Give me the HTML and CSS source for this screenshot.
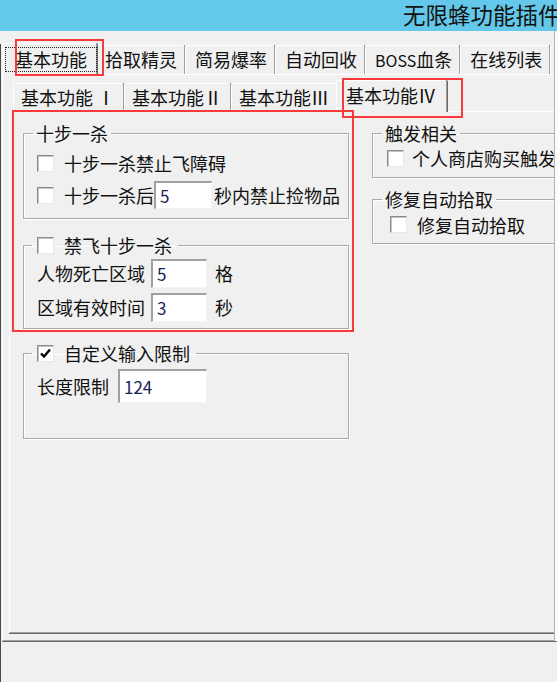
FILE: index.html
```html
<!DOCTYPE html>
<html lang="zh-CN">
<head>
    <meta charset="UTF-8">
    <meta name="viewport" content="width=device-width, initial-scale=1.0">
    <title>无限蜂功能插件</title>
    <link rel="stylesheet" href="styles.css">
</head>
<body>
    <div class="janela">
        <div class="titulo"><span>无限蜂功能插件</span></div>
        <div class="cliente">
            <div class="abas abas-principal">
                <div class="aba ativa"><span class="foco">基本功能</span></div>
                <div class="aba">拾取精灵</div>
                <div class="aba">简易爆率</div>
                <div class="aba">自动回收</div>
                <div class="aba"><span class="latino">BOSS</span>血条</div>
                <div class="aba">在线列表</div>
                <div class="aba aba-vazia"></div>
            </div>
            <div class="pagina pagina-externa">
                <div class="abas abas-sub">
                    <div class="aba">基本功能 Ⅰ</div>
                    <div class="aba">基本功能Ⅱ</div>
                    <div class="aba">基本功能Ⅲ</div>
                    <div class="aba ativa">基本功能Ⅳ</div>
                </div>
                <div class="pagina pagina-interna">
                    <div class="coluna coluna-esq">
                        <fieldset class="grupo g-shibu">
                            <legend>十步一杀</legend>
                            <div class="linha">
                                <span class="caixa"></span>
                                <span class="rotulo">十步一杀禁止飞障碍</span>
                            </div>
                            <div class="linha">
                                <span class="caixa"></span>
                                <span class="rotulo">十步一杀后</span>
                                <span class="campo c-seg">5</span>
                                <span class="unidade">秒内禁止捡物品</span>
                            </div>
                        </fieldset>
                        <fieldset class="grupo g-jinfei">
                            <legend><span class="caixa"></span>禁飞十步一杀</legend>
                            <div class="linha">
                                <span class="rotulo">人物死亡区域</span>
                                <span class="campo c-curto">5</span>
                                <span class="unidade">格</span>
                            </div>
                            <div class="linha">
                                <span class="rotulo">区域有效时间</span>
                                <span class="campo c-curto">3</span>
                                <span class="unidade">秒</span>
                            </div>
                        </fieldset>
                        <fieldset class="grupo g-limite">
                            <legend>
                                <span class="caixa marcada"><svg width="13" height="13" viewBox="0 0 13 13"><path d="M2 6.5 L5 9.5 L11 2.5" fill="none" stroke="#000" stroke-width="2.4"/></svg></span>自定义输入限制
                            </legend>
                            <div class="linha">
                                <span class="rotulo">长度限制</span>
                                <span class="campo c-longo">124</span>
                            </div>
                        </fieldset>
                    </div>
                    <div class="coluna coluna-dir">
                        <fieldset class="grupo g-gatilho">
                            <legend>触发相关</legend>
                            <div class="linha">
                                <span class="caixa"></span>
                                <span class="rotulo">个人商店购买触发</span>
                            </div>
                        </fieldset>
                        <fieldset class="grupo g-reparo">
                            <legend>修复自动拾取</legend>
                            <div class="linha">
                                <span class="caixa"></span>
                                <span class="rotulo">修复自动拾取</span>
                            </div>
                        </fieldset>
                    </div>
                </div>
            </div>
        </div>
        <div class="borda-dir"></div>
        <div class="marca marca-aba"></div>
        <div class="marca marca-sub"></div>
        <div class="marca marca-grupo"></div>
    </div>
</body>
</html>
```

FILE: styles.css
```css
body {
    margin: 0;
    background-color: #f0f0f0;
    font-family: "Noto Sans CJK SC", "Noto Sans", sans-serif;
    font-size: 18px;
    line-height: 20px;
    color: #111;
}

.janela {
    position: relative;
    width: 557px;
    height: 682px;
    overflow: hidden;
}

.titulo {
    height: 31px;
    background-color: #63c8e9;
    padding-left: 403px;
    font-size: 22.5px;
    line-height: 29px;
    white-space: nowrap;
    color: #111;
}

.cliente {
    height: 651px;
    border-left: 1px solid #4a4a4a;
    background-color: #f0f0f0;
}

/* abas */
.abas {
    display: flex;
    align-items: flex-end;
}

.aba {
    box-sizing: border-box;
    height: 29px;
    padding: 0 7px 0 9px;
    border-top: 1px solid #fff;
    border-left: 1px solid #fff;
    border-right: 1px solid #a0a0a0;
    box-shadow: 1px 0 0 #696969;
    border-radius: 2px 2px 0 0;
    line-height: 27px;
    white-space: nowrap;
    background-color: #f0f0f0;
}

.aba.ativa {
    position: relative;
    z-index: 2;
    height: 32px;
    margin: 0 -2px -1px;
    padding: 0 9px 0 11px;
    line-height: 30px;
}

.aba-vazia {
    width: 40px;
    flex: none;
}

.latino {
    font-size: 16px;
}

.abas-principal {
    height: 30px;
    margin-top: 13px;
    padding-left: 4px;
}

.foco {
    display: inline-block;
    margin: 0 -10px;
    padding: 0 9px;
    border: 1px dotted #222;
    line-height: 23px;
}

.abas-sub {
    height: 28px;
    padding: 8px 0 0 10px;
}

.abas-sub .aba {
    height: 28px;
    padding: 0 8px 0 7px;
    line-height: 26px;
}

.abas-sub .aba.ativa {
    height: 32px;
    padding: 0 10px 0 9px;
    line-height: 28px;
}

/* paginas */
.pagina {
    box-sizing: border-box;
    width: 640px;
    border-top: 1px solid #fff;
    border-left: 1px solid #fff;
    border-bottom: 1px solid #a0a0a0;
    box-shadow: 0 1px 0 #696969;
}

.pagina-externa {
    height: 567px;
    margin-left: 1px;
}

.pagina-interna {
    display: flex;
    gap: 23px;
    height: 522px;
    margin-left: 6px;
    padding: 11px 0 0 13px;
}

.borda-dir {
    position: absolute;
    top: 31px;
    right: 0;
    width: 2px;
    height: 610px;
    border-left: 1px solid #b4b4b4;
    background-color: #fafafa;
}

/* grupos */
.coluna {
    display: flex;
    flex-direction: column;
}

.coluna-esq {
    width: 326px;
}

.coluna-dir {
    width: 240px;
}

.grupo {
    box-sizing: border-box;
    min-width: 0;
    margin: 0;
    padding: 0 0 0 13px;
    border: 1px solid #a9a9a9;
    box-shadow: 1px 1px 0 #fff, inset 1px 1px 0 #fff;
}

.grupo legend {
    display: flex;
    align-items: center;
    gap: 10px;
    height: 20px;
    margin-left: -4px;
    padding: 0 3px;
    line-height: 20px;
}

.g-shibu {
    height: 96px;
    padding-top: 4px;
}

.g-jinfei {
    height: 94px;
    margin-top: 16px;
    padding-top: 1px;
}

.g-jinfei legend,
.g-limite legend {
    margin-left: -5px;
    padding: 0 6px 0 5px;
}

.g-limite {
    height: 96px;
    margin-top: 14px;
    padding-top: 6px;
}

.g-gatilho {
    height: 55px;
    padding-left: 14px;
}

.g-gatilho legend {
    margin-left: -5px;
}

.g-reparo {
    height: 55px;
    margin-top: 11px;
    padding-left: 17px;
}

.g-reparo legend {
    margin-left: -8px;
}

.linha {
    display: flex;
    align-items: center;
    height: 32px;
    white-space: nowrap;
}

.g-jinfei .linha,
.g-limite .linha {
    height: 34px;
}

.g-gatilho .linha {
    height: 30px;
    gap: 8px;
}

.g-reparo .linha {
    height: 31px;
    gap: 10px;
}

.g-shibu .caixa {
    margin-right: 10px;
}

.caixa {
    display: inline-flex;
    align-items: center;
    justify-content: center;
    box-sizing: border-box;
    width: 17px;
    height: 17px;
    flex: none;
    background-color: #fff;
    border: 1px solid;
    border-color: #8a8a8a #e8e8e8 #e8e8e8 #8a8a8a;
    box-shadow: inset 1px 1px 0 #c4c4c4;
}

.campo {
    display: flex;
    align-items: center;
    box-sizing: border-box;
    height: 29px;
    padding-left: 4px;
    background-color: #fff;
    border-style: solid;
    border-width: 2px 1px 1px 2px;
    border-color: #a0a0a0 #f4f4f4 #f4f4f4 #a0a0a0;
    font-size: 17px;
    color: #1b2456;
}

.c-seg {
    width: 58px;
    height: 28px;
    margin-right: 2px;
}

.c-curto {
    width: 56px;
    margin: 0 8px 0 6px;
}

.c-longo {
    width: 89px;
    height: 34px;
    margin-left: 9px;
}

/* marcas vermelhas */
.marca {
    position: absolute;
    box-sizing: border-box;
    border: 2px solid #f83a3a;
    z-index: 5;
}

.marca-aba {
    left: 15px;
    top: 39px;
    width: 89px;
    height: 37px;
}

.marca-sub {
    left: 342px;
    top: 78px;
    width: 121px;
    height: 40px;
}

.marca-grupo {
    left: 12px;
    top: 110px;
    width: 342px;
    height: 222px;
}
```
